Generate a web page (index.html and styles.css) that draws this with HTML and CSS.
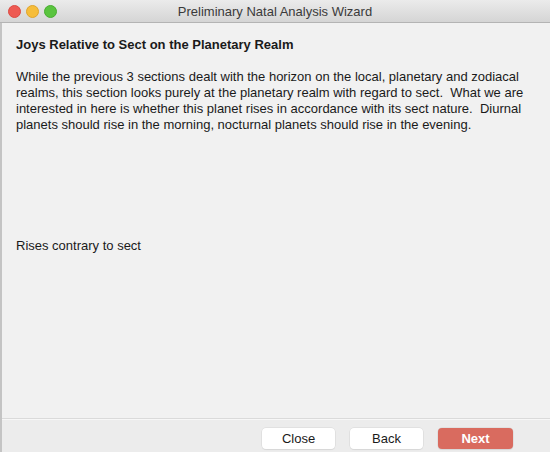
FILE: index.html
```html
<!DOCTYPE html>
<html lang="en">

<head>
    <meta charset="UTF-8">
    <title>Preliminary Natal Analysis Wizard</title>
    <link rel="stylesheet" href="styles.css">
</head>

<body>
    <div class="window">
        <!-- Title bar with traffic lights -->
        <div class="titlebar">
            <div class="lights">
                <span class="light red"></span>
                <span class="light yellow"></span>
                <span class="light green"></span>
            </div>
            <div class="title">Preliminary Natal Analysis Wizard</div>
        </div>

        <div class="content">
            <h1>Joys Relative to Sect on the Planetary Realm</h1>
            <p class="intro">While the previous 3 sections dealt with the horizon on the local, planetary and zodiacal
                realms, this section looks purely at the planetary realm with regard to sect.&nbsp; What we are
                interested in here is whether this planet rises in accordance with its sect nature.&nbsp; Diurnal
                planets should rise in the morning, nocturnal planets should rise in the evening.</p>
            <p class="result">Rises contrary to sect</p>
        </div>

        <div class="footer">
            <button class="btn">Close</button>
            <button class="btn">Back</button>
            <button class="btn primary">Next</button>
        </div>
    </div>
</body>

</html>
```

FILE: styles.css
```css
body {
    margin: 0;
    padding: 0;
    font-family: "Liberation Sans", Arial, sans-serif;
    font-size: 13px;
    color: #1a1a1a;
    background-color: #ececec;
}

.window {
    width: 550px;
    height: 452px;
    display: flex;
    flex-direction: column;
    box-sizing: border-box;
    border-left: 2px solid #c4c4c4;
    background-color: #ececec;
}

.titlebar {
    height: 22px;
    flex-shrink: 0;
    display: flex;
    align-items: center;
    position: relative;
    margin-left: -2px;
    background: linear-gradient(#ebebeb, #d5d5d5);
    border-bottom: 1px solid #b4b4b4;
}

.lights {
    display: flex;
    gap: 5px;
    padding-left: 8px;
}

.light {
    width: 13px;
    height: 13px;
    border-radius: 50%;
    box-sizing: border-box;
}

.red {
    background-color: #ee5a52;
    border: 1px solid #dc4a42;
}

.yellow {
    background-color: #f6bd3a;
    border: 1px solid #e0a42a;
}

.green {
    background-color: #5ac43f;
    border: 1px solid #48ad30;
}

.title {
    position: absolute;
    left: 0;
    right: 0;
    text-align: center;
    color: #3a3a3a;
    font-size: 13px;
}

.content {
    flex: 1;
    background-color: #f1f1f1;
    padding: 14px 14px 0 14px;
    border-bottom: 1px solid #dadada;
}

h1 {
    margin: 0;
    font-size: 13px;
    line-height: 16px;
    font-weight: bold;
}

.intro {
    margin: 16px 0 0 0;
    line-height: 16px;
}

.result {
    margin: 105px 0 0 0;
    line-height: 16px;
}

.footer {
    height: 33px;
    flex-shrink: 0;
    box-sizing: border-box;
    display: flex;
    justify-content: flex-end;
    align-items: flex-start;
    gap: 15px;
    padding: 8px 37px 0 0;
    background-color: #ececec;
    border-top: 1px solid #f7f7f7;
}

.btn {
    width: 73px;
    height: 21px;
    border: none;
    border-radius: 4px;
    background-color: #ffffff;
    font-family: "Liberation Sans", Arial, sans-serif;
    font-size: 13px;
    color: #1a1a1a;
    box-shadow: 0 0 0 0.5px #d6d6d6, 0 1px 1px rgba(0, 0, 0, 0.08);
}

.primary {
    width: 75px;
    background-color: #d96b5f;
    color: #ffffff;
    font-weight: bold;
}
```
